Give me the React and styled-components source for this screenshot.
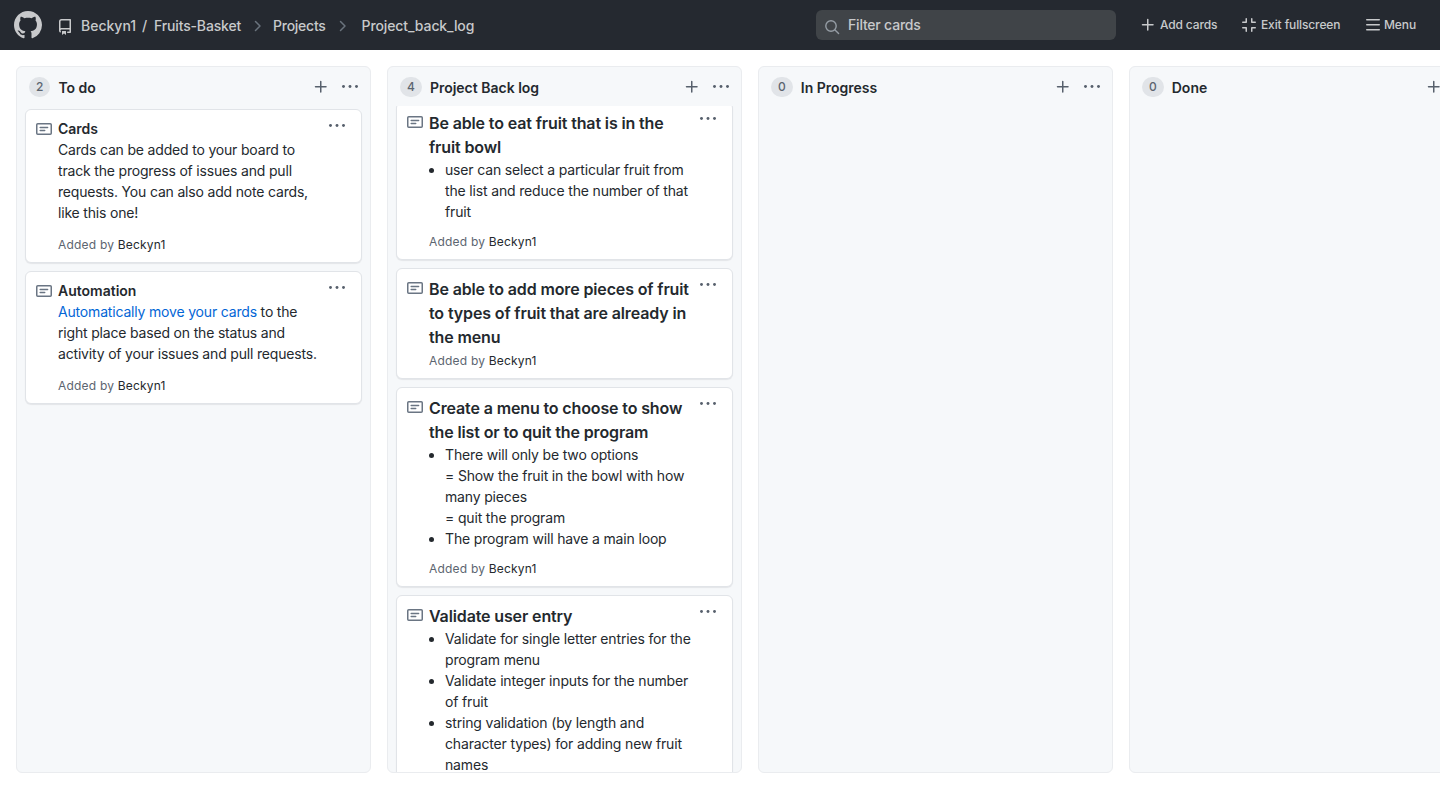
import React from "react";
import styled, { createGlobalStyle } from "styled-components";

const Global = createGlobalStyle`
  *, *::before, *::after { box-sizing: border-box; }
  html, body { margin: 0; height: 100%; }
  #root { height: 100%; }
  body {
    overflow: hidden;
    background: #fff;
    color: #24292e;
    font-family: Inter, "Liberation Sans", sans-serif;
    font-size: 14px;
    line-height: 21px;
  }
  svg { display: block; flex: none; }
`;

const Page = styled.div`
  display: flex;
  flex-direction: column;
  height: 100vh;
  overflow: hidden;
`;

const TopBar = styled.header`
  display: flex;
  align-items: center;
  flex: none;
  height: 50px;
  padding: 0 24px 0 14px;
  background: #252930;
  color: #c8c9cb;
  font-weight: 500;
  white-space: nowrap;
`;

const Breadcrumb = styled.nav`
  display: flex;
  align-items: center;
  margin: 1px auto 0 15px;
  > svg:first-child { margin-top: 2px; }
`;

const Crumb = styled.a`
  margin-left: ${(p) => p.$gap}px;
  width: ${(p) => p.$width}px;
  letter-spacing: ${(p) => p.$track || 0}px;
`;

const Chevron = styled.svg`
  margin-left: ${(p) => p.$gap}px;
  color: #6a737d;
`;

const Search = styled.div`
  display: flex;
  align-items: center;
  width: 300px;
  height: 30px;
  padding-left: 8px;
  gap: 8px;
  border-radius: 6px;
  background: #404448;
  font-weight: 450;
  letter-spacing: -0.2px;
  svg { margin-top: 3px; color: #959da5; }
  span { margin-top: -1px; }
`;

const Tools = styled.div`
  display: flex;
  align-items: center;
  width: 276px;
  margin: -1px 0 0 24px;
  font-size: 12px;
`;

const Tool = styled.button`
  display: flex;
  align-items: center;
  flex: none;
  gap: ${(p) => p.$gap || 4}px;
  width: ${(p) => p.$width}px;
  padding: 0;
  border: 0;
  background: none;
  color: inherit;
  font: inherit;
  letter-spacing: ${(p) => p.$track}px;
`;

const Board = styled.main`
  display: flex;
  flex: 1;
  min-height: 0;
  gap: 16px;
  padding: 16px;
`;

const ColumnBox = styled.section`
  display: flex;
  flex-direction: column;
  flex: 0 0 355px;
  overflow: hidden;
  border: 1px solid #eaecef;
  border-radius: 6px;
  background: #f6f8fa;
`;

const ColumnHead = styled.div`
  display: flex;
  align-items: center;
  flex: none;
  height: 39px;
  padding: 0 11px 0 12px;
`;

const Count = styled.span`
  min-width: 21px;
  height: 20px;
  padding: 0 7px;
  border-radius: 10px;
  background: #e1e4e8;
  color: #5c6570;
  font-size: 12px;
  font-weight: 500;
  line-height: 20px;
  text-align: center;
`;

const ColumnTitle = styled.h3`
  margin: 2px auto 0 8px;
  font-size: 14px;
  font-weight: 600;
  line-height: 21px;
`;

const HeadIcons = styled.div`
  display: flex;
  gap: 12px;
  color: #57606c;
`;

const CardArea = styled.div`
  flex: 1;
  min-height: 0;
  overflow: hidden;
`;

const CardList = styled.div`
  display: flex;
  flex-direction: column;
  gap: 8px;
  padding: 3px 8px 8px;
  margin-top: ${(p) => -p.$scrolled}px;
`;

const CardBox = styled.article`
  display: flex;
  align-items: flex-start;
  padding: 8px 15px 8px 10px;
  border: 1px solid #e1e4e8;
  border-radius: 6px;
  background: #fff;
  box-shadow: 0 1px 1px rgba(27, 31, 35, 0.08);
`;

const IconSlot = styled.span`
  margin-top: ${(p) => p.$top}px;
  color: ${(p) => p.$color};
`;

const CardText = styled.div`
  flex: 1;
  min-width: 0;
  margin-left: 6px;
  white-space: pre;
`;

const CardTitle = styled.h4`
  margin: 0;
  font-weight: 600;
  font-size: ${(p) => (p.$large ? 16 : 14)}px;
  line-height: ${(p) => (p.$large ? 24 : 21)}px;
  letter-spacing: ${(p) => (p.$large ? -0.13 : 0)}px;
`;

const Paragraph = styled.p`
  margin: 0 0 10px;
  letter-spacing: -0.18px;
`;

const Bullets = styled.ul`
  margin: 0 0 8px;
  padding: 0 0 0 16px;
  letter-spacing: -0.16px;
`;

const Link = styled.a`
  color: #0366d6;
`;

const Footer = styled.div`
  height: 21px;
  padding-top: 1px;
  color: #5c6570;
  font-size: 12px;
  letter-spacing: 0.2px;
  b { color: #24292e; font-weight: 400; }
`;

const Mark = () => (
  <svg width="28" height="28" viewBox="0 0 16 16" fill="currentColor">
    <path d="M8 0C3.58 0 0 3.58 0 8c0 3.54 2.29 6.53 5.47 7.59.4.07.55-.17.55-.38 0-.19-.01-.82-.01-1.49-2.01.37-2.53-.49-2.69-.94-.09-.23-.48-.94-.82-1.13-.28-.15-.68-.52-.01-.53.63-.01 1.08.58 1.23.82.72 1.21 1.87.87 2.33.66.07-.52.28-.87.51-1.07-1.78-.2-3.64-.89-3.64-3.95 0-.87.31-1.59.82-2.15-.08-.2-.36-1.02.08-2.12 0 0 .67-.21 2.2.82.64-.18 1.32-.27 2-.27s1.36.09 2 .27c1.53-1.04 2.2-.82 2.2-.82.44 1.1.16 1.92.08 2.12.51.56.82 1.27.82 2.15 0 3.07-1.87 3.75-3.65 3.95.29.25.54.73.54 1.48 0 1.07-.01 1.93-.01 2.2 0 .21.15.46.55.38A8.01 8.01 0 0016 8c0-4.42-3.58-8-8-8z" />
  </svg>
);

const RepoIcon = () => (
  <svg width="16" height="16" viewBox="0 0 16 16" fill="currentColor" fillRule="evenodd">
    <path d="M2 2.5A2.5 2.5 0 014.5 0h8.75a.75.75 0 01.75.75v12.5a.75.75 0 01-.75.75h-2.5a.75.75 0 110-1.5h1.75v-2h-8a1 1 0 00-.714 1.7.75.75 0 01-1.072 1.05A2.495 2.495 0 012 11.5v-9zm10.5-1V9h-8c-.356 0-.694.074-1 .208V2.5a1 1 0 011-1h8zM5 12.25v3.25a.25.25 0 00.4.2l1.45-1.087a.25.25 0 01.3 0L8.6 15.7a.25.25 0 00.4-.2v-3.25a.25.25 0 00-.25-.25h-3.5a.25.25 0 00-.25.25z" />
  </svg>
);

const Sep = ({ gap }) => (
  <Chevron $gap={gap} width="8" height="12" viewBox="0 0 8 12" fill="none" stroke="currentColor" strokeWidth="1.5" strokeLinecap="round" strokeLinejoin="round">
    <path d="M1.5 1.5L6 6l-4.5 4.5" />
  </Chevron>
);

const SearchIcon = () => (
  <svg width="16" height="16" viewBox="0 0 16 16" fill="none" stroke="currentColor" strokeWidth="1.4" strokeLinecap="round">
    <circle cx="7" cy="7" r="5.2" />
    <path d="M11 11l3.6 3.6" />
  </svg>
);

const PlusIcon = () => (
  <svg width="16" height="16" viewBox="0 0 16 16" fill="none" stroke="currentColor" strokeWidth="1.5" strokeLinecap="round">
    <path d="M7.75 2.5v10.5M2.5 7.75h10.5" />
  </svg>
);

const ShrinkIcon = () => (
  <svg width="16" height="16" viewBox="0 0 16 16" fill="none" stroke="currentColor" strokeWidth="1.5" strokeLinecap="round" strokeLinejoin="round">
    <path d="M5.25 1.75v3.5h-3.5M10.75 1.75v3.5h3.5M5.25 14.25v-3.5h-3.5M10.75 14.25v-3.5h3.5" />
  </svg>
);

const MenuIcon = () => (
  <svg width="16" height="16" viewBox="0 0 16 16" fill="none" stroke="currentColor" strokeWidth="1.5" strokeLinecap="round">
    <path d="M1.75 2.75h12.5M1.75 7.75h12.5M1.75 12.75h12.5" />
  </svg>
);

const Dots = () => (
  <svg width="18" height="16" viewBox="0 0 18 16" fill="currentColor">
    <circle cx="2.5" cy="7.5" r="1.45" />
    <circle cx="9" cy="7.5" r="1.45" />
    <circle cx="15.5" cy="7.5" r="1.45" />
  </svg>
);

const NoteIcon = () => (
  <svg width="16" height="16" viewBox="0 0 16 16" fill="none" stroke="currentColor" strokeWidth="1.5" strokeLinecap="round">
    <rect x="0.75" y="2.75" width="14.5" height="10.5" rx="1" />
    <path d="M4.2 6.4h7.4M4.2 9.4h4.5" />
  </svg>
);

const Card = ({ title, large, children }) => (
  <CardBox>
    <IconSlot $top={3} $color="#6a7583"><NoteIcon /></IconSlot>
    <CardText>
      <CardTitle $large={large}>{title}</CardTitle>
      {children}
      <Footer>Added by <b>Beckyn1</b></Footer>
    </CardText>
    <IconSlot $top={0} $color="#57606c"><Dots /></IconSlot>
  </CardBox>
);

const Column = ({ count, title, scrolled = 0, children }) => (
  <ColumnBox>
    <ColumnHead>
      <Count>{count}</Count>
      <ColumnTitle>{title}</ColumnTitle>
      <HeadIcons><PlusIcon /><Dots /></HeadIcons>
    </ColumnHead>
    <CardArea>
      <CardList $scrolled={scrolled}>{children}</CardList>
    </CardArea>
  </ColumnBox>
);

export default function App() {
  return (
    <Page>
      <Global />
      <TopBar>
        <Mark />
        <Breadcrumb>
          <RepoIcon />
          <Crumb $gap={8} $width={53}>Beckyn1</Crumb>
          <Crumb $gap={8} $width={5}>/</Crumb>
          <Crumb $gap={7} $width={87} $track={-0.15}>Fruits-Basket</Crumb>
          <Sep gap={13} />
          <Crumb $gap={11} $width={53} $track={-0.25}>Projects</Crumb>
          <Sep gap={13} />
          <Crumb $gap={14.5} $width={113} $track={-0.1}>Project_back_log</Crumb>
        </Breadcrumb>
        <Search><SearchIcon /><span>Filter cards</span></Search>
        <Tools>
          <Tool $width={101} $track={-0.15}><PlusIcon />Add cards</Tool>
          <Tool $width={124} $track={-0.12}><ShrinkIcon />Exit fullscreen</Tool>
          <Tool $width={52} $gap={3} $track={-0.1}><MenuIcon />Menu</Tool>
        </Tools>
      </TopBar>
      <Board>
        <Column count={2} title="To do">
          <Card title="Cards">
            <Paragraph>{"Cards can be added to your board to\ntrack the progress of issues and pull\nrequests. You can also add note cards,\nlike this one!"}</Paragraph>
          </Card>
          <Card title="Automation">
            <Paragraph><Link>Automatically move your cards</Link>{" to the\nright place based on the status and\nactivity of your issues and pull requests."}</Paragraph>
          </Card>
        </Column>
        <Column count={4} title="Project Back log" scrolled={7}>
          <Card large title={"Be able to eat fruit that is in the\nfruit bowl"}>
            <Bullets><li>{"user can select a particular fruit from\nthe list and reduce the number of that\nfruit"}</li></Bullets>
          </Card>
          <Card large title={"Be able to add more pieces of fruit\nto types of fruit that are already in\nthe menu"} />
          <Card large title={"Create a menu to choose to show\nthe list or to quit the program"}>
            <Bullets>
              <li>{"There will only be two options\n= Show the fruit in the bowl with how\nmany pieces\n= quit the program"}</li>
              <li>The program will have a main loop</li>
            </Bullets>
          </Card>
          <Card large title="Validate user entry">
            <Bullets>
              <li>{"Validate for single letter entries for the\nprogram menu"}</li>
              <li>{"Validate integer inputs for the number\nof fruit"}</li>
              <li>{"string validation (by length and\ncharacter types) for adding new fruit\nnames"}</li>
            </Bullets>
          </Card>
        </Column>
        <Column count={0} title="In Progress" />
        <Column count={0} title="Done" />
      </Board>
    </Page>
  );
}
